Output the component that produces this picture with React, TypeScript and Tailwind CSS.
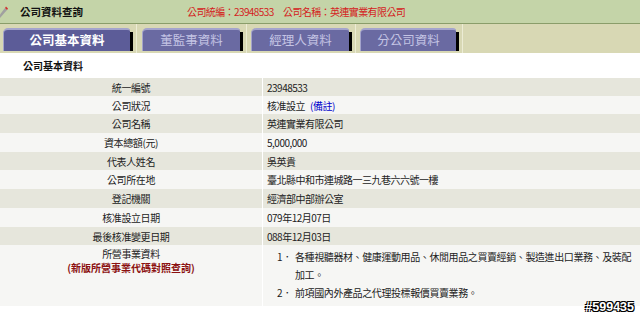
import React from "react";

const rows: { label: string; value: React.ReactNode; h: string }[] = [
  { label: "統一編號", value: "23948533", h: "h-[18px]" },
  {
    label: "公司狀況",
    value: (
      <>
        核准設立 <span className="ml-[5px] text-[#0000cc]">(備註)</span>
      </>
    ),
    h: "h-[18px]",
  },
  { label: "公司名稱", value: "英連實業有限公司", h: "h-[19px]" },
  { label: "資本總額(元)", value: "5,000,000", h: "h-[19px]" },
  { label: "代表人姓名", value: "吳英貴", h: "h-[18px]" },
  { label: "公司所在地", value: "臺北縣中和市連城路一三九巷六六號一樓", h: "h-[19px]" },
  { label: "登記機關", value: "經濟部中部辦公室", h: "h-[19px]" },
  { label: "核准設立日期", value: "079年12月07日", h: "h-[19px]" },
  { label: "最後核准變更日期", value: "088年12月03日", h: "h-[18px]" },
];

function Tab({ text, active, width, pl }: { text: string; active?: boolean; width: string; pl: string }) {
  return (
    <div className={`${width} ${pl} flex h-[29px] items-end border-r border-[#ececd4] pr-[3px] pb-[2px]`}>
      <div className="flex h-[23px] w-full">
        <div
          className={`flex flex-1 items-center justify-center rounded-tl-[5px] rounded-tr-[3px] border-t-2 border-l border-[#a4a4cc] text-[12.5px] ${
            active ? "bg-[#5c5c98] font-bold text-white" : "bg-[#6a6aa2] text-[#c4c4e4]"
          }`}
        >
          {text}
        </div>
        <div className="mt-[4px] w-[3px] bg-black" />
      </div>
    </div>
  );
}

export default function App() {
  return (
    <div className="relative h-[316px] w-[640px] overflow-hidden bg-white font-['Noto_Sans_CJK_TC',sans-serif] text-[10px] text-[#222]">
      {/* header */}
      <div className="flex h-[24px] items-center border-b border-[#8a9d6a] bg-[#c4d4a8]">
        <svg width="10" height="14" viewBox="0 0 10 14" className="-ml-[2px]">
          <path d="M0 12 L7 3 L9 5 L2 13 Z" fill="#a0a0a0" />
          <path d="M7 3 L8 1.5 L10 3.5 L9 5 Z" fill="#d03030" />
          <path d="M0 12 L2 13 L0 14 Z" fill="#303030" />
        </svg>
        <span className="ml-[12px] text-[10.5px] font-bold text-[#111]">公司資料查詢</span>
        <span className="ml-[104px] tracking-[-0.6px] text-[#d42020]">
          公司統編：23948533　公司名稱：英連實業有限公司
        </span>
      </div>

      {/* tabs */}
      <div className="flex h-[29px] bg-[#d8d8b4]">
        <Tab text="公司基本資料" active width="w-[137px]" pl="pl-[3px]" />
        <Tab text="董監事資料" width="w-[110px]" pl="pl-[5px]" />
        <Tab text="經理人資料" width="w-[109px]" pl="pl-[4px]" />
        <Tab text="分公司資料" width="w-[107px]" pl="pl-[4px]" />
      </div>

      <div className="flex h-[25px] items-center pl-[23px] font-bold text-[#111]">公司基本資料</div>

      {/* table */}
      <div className="flex flex-col">
        {rows.map((r, i) => (
          <div
            key={r.label}
            className={`flex ${r.h} items-center ${i % 2 === 0 ? "bg-[#e6e6dc]" : "bg-[#f6f6f4]"}`}
          >
            <div className="w-[262px] text-center tracking-[-0.4px]">{r.label}</div>
            <div className="flex h-full flex-1 items-center border-l border-white pl-[4px] tracking-[-0.5px]">
              {r.value}
            </div>
          </div>
        ))}
        <div className="flex h-[61px] bg-[#f6f6f4]">
          <div className="flex w-[262px] flex-col items-center pt-[2px] leading-[14px]">
            <span className="tracking-[-0.4px]">所營事業資料</span>
            <span className="font-bold text-[#8b1010]">(新版所營事業代碼對照查詢)</span>
          </div>
          <div className="flex-1 border-l border-white pt-[3px] pl-[14px] leading-[18px] tracking-[-0.4px]">
            <div className="flex">
              <span className="w-[18px] shrink-0">1．</span>
              <span>
                各種視聽器材、健康運動用品、休閒用品之買賣經銷、製造進出口業務、及裝配
                <br />
                加工。
              </span>
            </div>
            <div className="flex">
              <span className="w-[18px] shrink-0">2．</span>
              <span>前項國內外產品之代理投標報價買賣業務。</span>
            </div>
          </div>
        </div>
      </div>

      {/* watermark */}
      <span className="absolute right-[6px] bottom-[2px] font-['Liberation_Sans',sans-serif] text-[12.5px] leading-[14px] font-bold text-white [text-shadow:-1px_-1px_0_#000,1px_-1px_0_#000,-1px_1px_0_#000,1px_1px_0_#000]">
        #599435
      </span>
    </div>
  );
}
